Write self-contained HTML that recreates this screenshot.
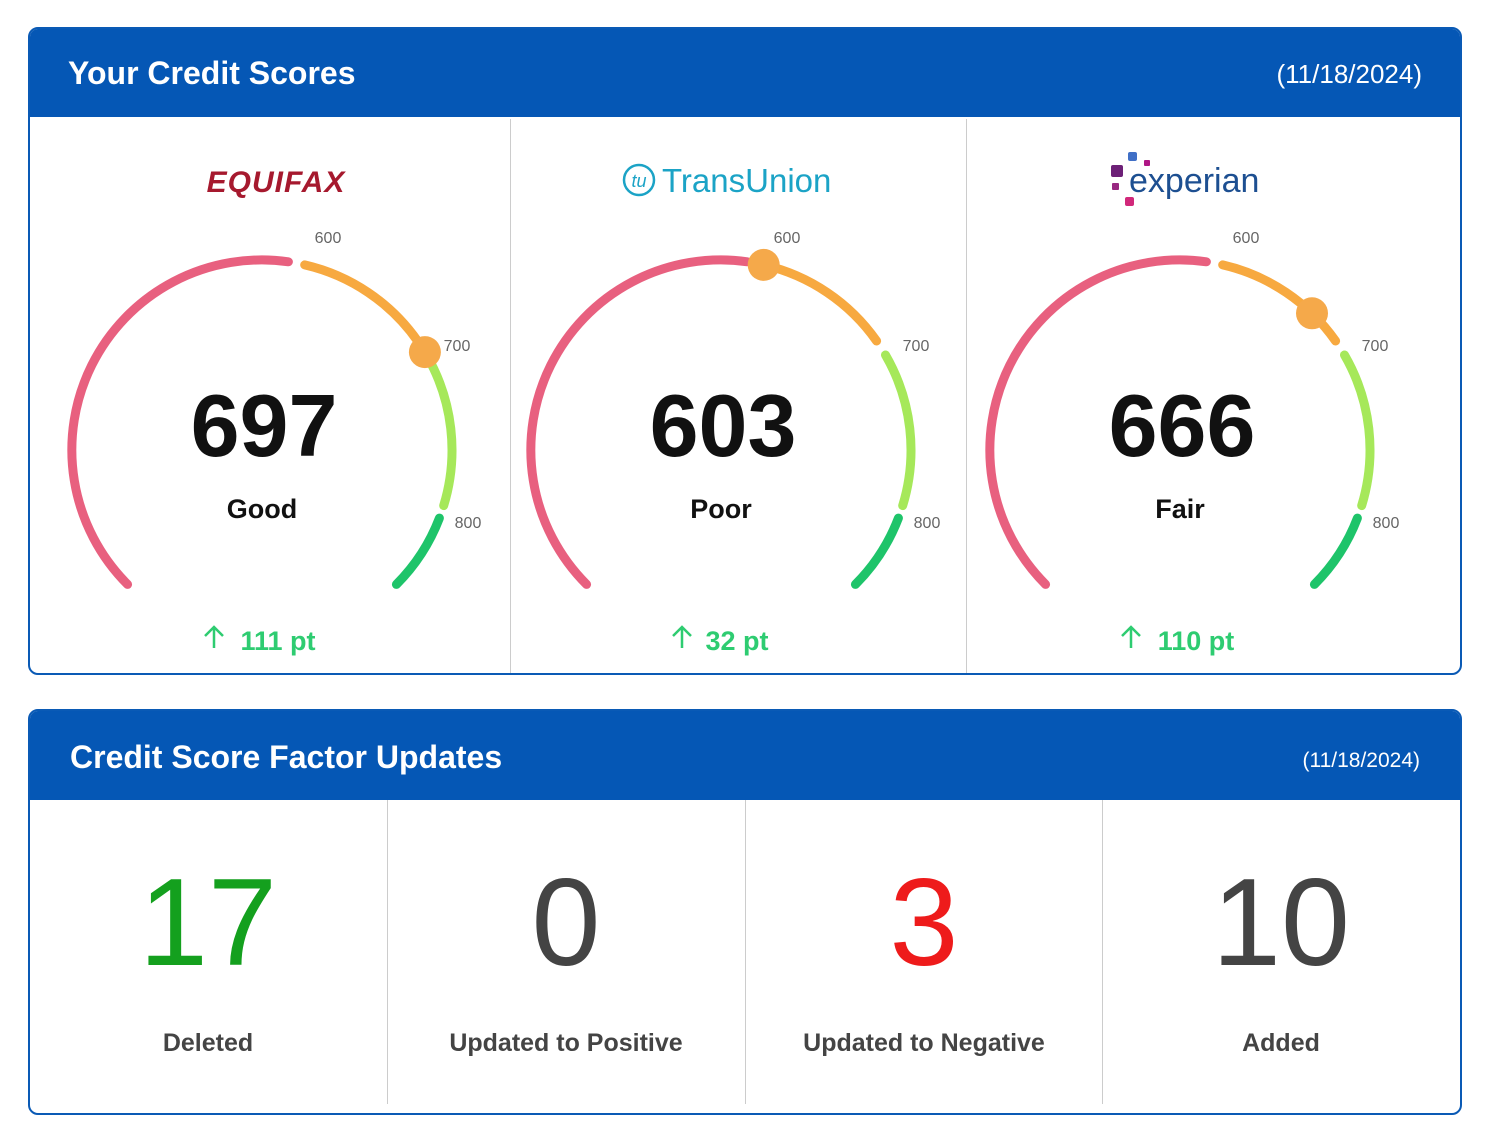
<!DOCTYPE html>
<html><head><meta charset="utf-8"><style>
body{margin:0;width:1500px;height:1131px;background:#fff;font-family:"Liberation Sans",sans-serif;position:relative;overflow:hidden}
.card{position:absolute;left:28px;width:1430px;border:2px solid #0a5ab5;border-radius:10px;overflow:hidden;background:#fff}
.hd{background:#0557b5;color:#fff;position:relative;height:88px}
.hd .t{position:absolute;left:38px;font-weight:bold;font-size:32px}
.hd .d{position:absolute;right:38px;font-size:26px}
.vl{position:absolute;width:1px;background:#ccc}
.big{position:absolute;width:356px;text-align:center;font-size:124px;top:150px;line-height:1}
.lab{position:absolute;width:356px;text-align:center;font-size:25px;font-weight:bold;color:#444;top:318px}
</style></head><body>
<div class="card" style="top:27px;height:644px">
 <div class="hd"><div class="t" style="top:26px">Your Credit Scores</div><div class="d" style="top:30px">(11/18/2024)</div></div>
 <div class="vl" style="left:480px;top:90px;height:554px"></div>
 <div class="vl" style="left:936px;top:90px;height:554px"></div>
</div>
<div class="card" style="top:709px;height:402px">
 <div class="hd" style="height:89px"><div class="t" style="left:40px;top:28px">Credit Score Factor Updates</div><div class="d" style="top:38px;font-size:21px;right:40px">(11/18/2024)</div></div>
 <div class="vl" style="left:357px;top:89px;height:304px"></div>
 <div class="vl" style="left:715px;top:89px;height:304px"></div>
 <div class="vl" style="left:1072px;top:89px;height:304px"></div>
 <div class="big" style="left:0;color:#14a01e">17</div>
 <div class="big" style="left:358px;color:#444">0</div>
 <div class="big" style="left:716px;color:#ee1b1b">3</div>
 <div class="big" style="left:1073px;color:#444">10</div>
 <div class="lab" style="left:0">Deleted</div>
 <div class="lab" style="left:358px">Updated to Positive</div>
 <div class="lab" style="left:716px">Updated to Negative</div>
 <div class="lab" style="left:1073px">Added</div>
</div>
<svg width="1500" height="700" style="position:absolute;left:0;top:0" font-family="Liberation Sans, sans-serif">
 <defs>
  <g id="g">
   <g fill="none" stroke-width="9" stroke-linecap="round">
    <path d="M-134.4 134.4 A190 190 0 0 1 26.4 -188.2" stroke="#e8607f"/>
    <path d="M42.7 -185.1 A190 190 0 0 1 155.6 -109" stroke="#f7a940"/>
    <path d="M164.5 -95 A190 190 0 0 1 181.7 55.6" stroke="#a6e85a"/>
    <path d="M177.4 68.1 A190 190 0 0 1 134.4 134.4" stroke="#1ec46a"/>
   </g>
   <g fill="#666" font-size="16" text-anchor="middle">
    <text x="66" y="-207">600</text><text x="195" y="-99">700</text><text x="206" y="78">800</text>
   </g>
  </g>
 </defs>
 <g transform="translate(262,450)"><use href="#g"/><circle cx="162.9" cy="-97.9" r="16" fill="#f5a94a"/></g>
 <g transform="translate(721,450)"><use href="#g"/><circle cx="42.7" cy="-185.1" r="16" fill="#f5a94a"/></g>
 <g transform="translate(1180,450)"><use href="#g"/><circle cx="132" cy="-136.7" r="16" fill="#f5a94a"/></g>
 <g text-anchor="middle" font-weight="bold">
  <text x="264" y="456" font-size="88" fill="#111">697</text>
  <text x="723" y="456" font-size="88" fill="#111">603</text>
  <text x="1182" y="456" font-size="88" fill="#111">666</text>
  <text x="262" y="518" font-size="27" fill="#111">Good</text>
  <text x="721" y="518" font-size="27" fill="#111">Poor</text>
  <text x="1180" y="518" font-size="27" fill="#111">Fair</text>
  <g font-size="27" fill="#2ecc71">
   <text x="278" y="650">111 pt</text><text x="737" y="650">32 pt</text><text x="1196" y="650">110 pt</text>
  </g>
 </g>
 <g stroke="#2ecc71" stroke-width="2.5" fill="none">
  <path d="M214 648V627M205 636L214 627L223 636"/>
  <path d="M682 648V627M673 636L682 627L691 636"/>
  <path d="M1131 648V627M1122 636L1131 627L1140 636"/>
 </g>
 <text x="276" y="192" text-anchor="middle" font-size="30" font-weight="bold" font-style="italic" fill="#a6192e" letter-spacing="1">EQUIFAX</text>
 <circle cx="639" cy="180" r="15" fill="none" stroke="#1ba3c6" stroke-width="2.5"/>
 <text x="639" y="187" text-anchor="middle" font-size="18" font-style="italic" fill="#1ba3c6">tu</text>
 <text x="662" y="192" font-size="33" fill="#1ba3c6">TransUnion</text>
 <rect x="1128" y="152" width="9" height="9" rx="2" fill="#406fc6"/>
 <rect x="1111" y="165" width="12" height="12" rx="2" fill="#6d2077"/>
 <rect x="1144" y="160" width="6" height="6" rx="1" fill="#af1685"/>
 <rect x="1112" y="183" width="7" height="7" rx="1" fill="#982881"/>
 <rect x="1125" y="197" width="9" height="9" rx="2" fill="#d1287a"/>
 <text x="1129" y="192" font-size="34" fill="#1d4f91">experian</text>
</svg>
</body></html>
